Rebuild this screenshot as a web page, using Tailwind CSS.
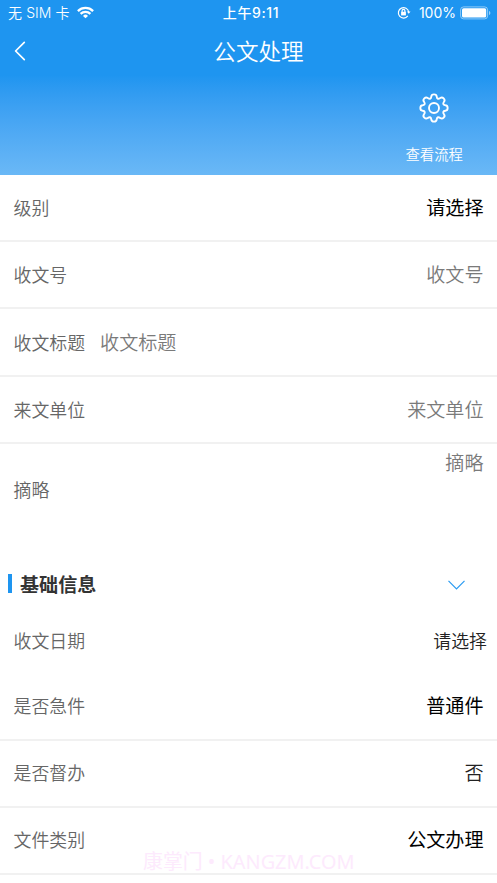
<!DOCTYPE html>
<html lang="zh-CN">
<head>
<meta charset="utf-8">
<title>公文处理</title>
<script src="https://cdn.jsdelivr.net/npm/@tailwindcss/browser@4"></script>
</head>
<body class="bg-white">
<div class="relative flex h-[883px] w-[497px] flex-col overflow-hidden bg-white font-['Inter','Noto_Sans_CJK_SC',sans-serif] text-[17.9px] font-[350] text-[#666]">
  <header class="flex h-[175px] shrink-0 flex-col bg-linear-to-b from-[#1e95f0] from-43% to-[#6ab8f6] text-white">
    <div class="grid h-[26px] grid-cols-3 items-center pr-[6px] pl-2 text-[14px] leading-none font-normal">
      <div class="flex items-center gap-[7px]">
        <span class="font-[350] tracking-[.1px]">无 SIM 卡</span>
        <svg class="-mt-[2px] h-[13px] w-[17px]" viewBox="0 0 17 13" fill="none" stroke="currentColor" stroke-width="2.3"><path d="M.9 5.1a10.8 10.8 0 0 1 15.2 0M3.6 7.9a7 7 0 0 1 9.8 0"/><path d="M8.5 12.3 6 9.9a3.5 3.5 0 0 1 5 0z" fill="currentColor" stroke="none"/></svg>
      </div>
      <div class="pl-[3px] text-center font-medium tracking-[.6px]">上午9:11</div>
      <div class="flex items-center justify-end">
        <svg class="-mt-[1px] mr-2 h-[13px] w-[14px]" viewBox="0 0 14 13" fill="none" stroke="currentColor" stroke-width="1.2"><path d="M10.8 9.9A5.2 5.2 0 1 1 11.7 6"/><path d="m9.9 5.4 1.8 2.3 1.8-2.3z" fill="currentColor" stroke="none"/><path d="M4.1 5.8h4.8v3.6H4.1z" fill="currentColor" stroke="none"/><path d="M5.1 6V4.7a1.4 1.4 0 0 1 2.8 0V6"/></svg>
        <span class="mr-[4px]">100%</span>
        <svg class="-mt-[1px] h-[14px] w-[31px]" viewBox="0 0 31 14"><rect x=".6" y=".9" width="27" height="12" rx="3" fill="none" stroke="#fff" stroke-opacity=".5" stroke-width="1"/><rect x="2" y="2.3" width="24.2" height="9.2" rx="1.6" fill="#fff"/><path d="M29 5v4c1.8-.5 1.8-3.5 0-4" fill="#fff" fill-opacity=".55"/></svg>
      </div>
    </div>
    <div class="grid h-[50px] grid-cols-[60px_1fr_60px] items-center">
      <svg class="ml-[14px] h-[20px] w-[12px]" viewBox="0 0 12 20" fill="none" stroke="currentColor" stroke-width="1.7" stroke-linecap="round" stroke-linejoin="round"><path d="M10.3 1.3 1.6 10l8.7 8.7"/></svg>
      <h1 class="pt-[2px] pl-[20px] text-center text-[22.6px] leading-none">公文处理</h1>
    </div>
    <div class="flex flex-col items-center self-end pt-[17px] pr-[34px]">
      <svg class="size-[30px]" viewBox="-15 -15 30 30" fill="none" stroke="currentColor" stroke-width="1.9" stroke-linejoin="round"><circle r="5"/><path d="M-2.7-11.4C-2.5-14.4 2.5-14.4 2.7-11.4C3-8.8 4.5-8.8 6.2-10C8.6-11.8 11.8-8.6 10-6.2C8.8-4.5 8.8-3 11.4-2.7C14.4-2.5 14.4 2.5 11.4 2.7C8.8 3 8.8 4.5 10 6.2C11.8 8.6 8.6 11.8 6.2 10C4.5 8.8 3 8.8 2.7 11.4C2.5 14.4-2.5 14.4-2.7 11.4C-3 8.8-4.5 8.8-6.2 10C-8.6 11.8-11.8 8.6-10 6.2C-8.8 4.5-8.8 3-11.4 2.7C-14.4 2.5-14.4-2.5-11.4-2.7C-8.8-3-8.8-4.5-10-6.2C-11.8-8.6-8.6-11.8-6.2-10C-4.5-8.8-3-8.8-2.7-11.4Z"/></svg>
      <span class="mt-[25px] text-[14.4px] leading-none">查看流程</span>
    </div>
  </header>

  <main class="flex flex-col leading-none">
    <div class="flex h-[67.2px] items-center justify-between border-b-2 border-[#f1f1f1] px-[13.5px] pt-[2px]"><span>级别</span><span class="text-[19.1px] font-normal text-black">请选择</span></div>
    <div class="flex h-[67.2px] items-center justify-between border-b-2 border-[#f1f1f1] px-[13.5px] pt-[2px]"><span>收文号</span><span class="text-[19.1px] text-[#7a7a7a]">收文号</span></div>
    <div class="flex h-[67.2px] items-center gap-[15px] border-b-2 border-[#f1f1f1] px-[13.5px] pt-[3px]"><span>收文标题</span><span class="text-[19.1px] text-[#7a7a7a]">收文标题</span></div>
    <div class="flex h-[67.2px] items-center justify-between border-b-2 border-[#f1f1f1] px-[13.5px] pt-[3px]"><span>来文单位</span><span class="text-[19.1px] text-[#7a7a7a]">来文单位</span></div>
    <div class="flex h-[94px] items-center justify-between px-[13.5px] pt-[1px]"><span>摘略</span><span class="self-start pt-[9px] text-[19.1px] text-[#7a7a7a]">摘略</span></div>

    <div class="mt-[12px] flex h-[68px] items-center pr-[32px] pl-2">
      <span class="h-[19px] w-[4px] bg-[#1e95f0]"></span>
      <h2 class="ml-2 flex-1 pt-[3px] text-[19.1px] font-bold text-[#333]">基础信息</h2>
      <svg class="mt-[2px] h-[10px] w-[17px]" viewBox="0 0 17 10" fill="none" stroke="#2b9bf1" stroke-width="1.2"><path d="m.5.8 8 8 8-8"/></svg>
    </div>
    <div class="flex h-[55px] items-center justify-between pr-[10px] pb-[6px] pl-[13.5px]"><span>收文日期</span><span class="text-[#222]">请选择</span></div>
    <div class="flex h-[68px] items-center justify-between border-b-2 border-[#f1f1f1] px-[13.5px] pt-[2px]"><span>是否急件</span><span class="text-[19.1px] font-normal text-black">普通件</span></div>
    <div class="flex h-[67.2px] items-center justify-between border-b-2 border-[#f1f1f1] px-[13.5px] pt-[1px]"><span>是否督办</span><span class="text-[19.1px] text-[#222]">否</span></div>
    <div class="flex h-[67.2px] items-center justify-between border-b-2 border-[#f1f1f1] px-[13.5px] pt-[1px]"><span>文件类别</span><span class="text-[19.1px] font-normal text-black">公文办理</span></div>
  </main>
  <div class="pointer-events-none absolute top-[852px] left-[143px] font-['Noto_Sans','Noto_Sans_CJK_SC',sans-serif] text-[19.9px] leading-[20px] font-normal whitespace-nowrap text-[#fdeafd]">康掌门 • KANGZM.COM</div>
</div>
</body>
</html>
